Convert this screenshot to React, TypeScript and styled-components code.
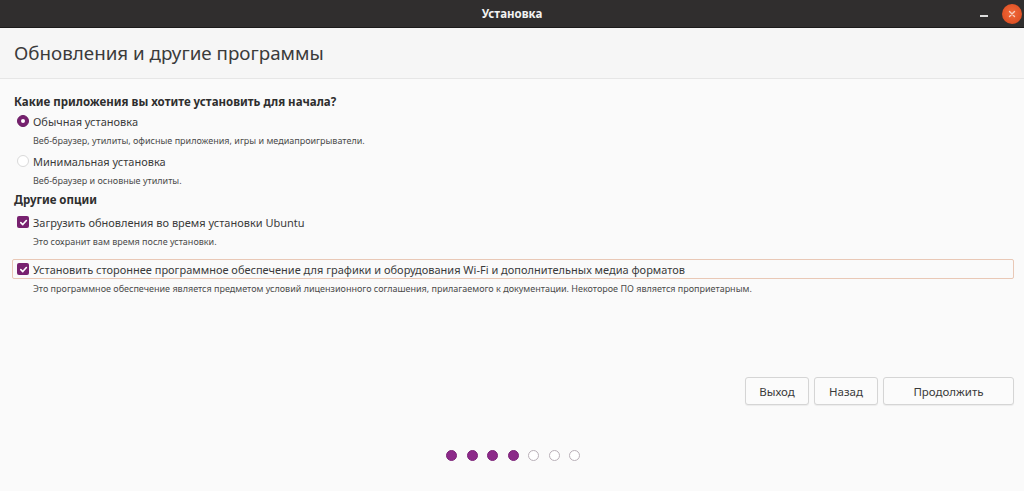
import React from "react";
import styled, { createGlobalStyle } from "styled-components";

const Global = createGlobalStyle`
  html, body { margin: 0; padding: 0; background: #fafafa; }
  body { font-family: "Noto Sans", "Open Sans", sans-serif; color: #3d3d3d; }
  * { box-sizing: border-box; }
`;

const Window = styled.div`
  width: 1024px;
  height: 491px;
  display: flex;
  flex-direction: column;
  background: #fafafa;
  overflow: hidden;
`;

const TitleBar = styled.div`
  height: 28px;
  flex: none;
  background: #302e2e;
  border-bottom: 1px solid #1c1b1b;
  display: grid;
  grid-template-columns: 1fr auto 1fr;
  align-items: center;
  color: #f2f2f2;
  font-size: 11.5px;
  font-weight: 700;
`;

const TitleText = styled.div`
  grid-column: 2;
`;

const TitleControls = styled.div`
  grid-column: 3;
  justify-self: end;
  display: flex;
  align-items: center;
  gap: 14px;
  padding-right: 2px;
`;

const MinButton = styled.div`
  width: 8px;
  height: 2px;
  background: #dcdcdc;
  margin-top: 4px;
`;

const CloseButton = styled.div`
  width: 20px;
  height: 20px;
  border-radius: 50%;
  background: radial-gradient(circle at 50% 45%, #f26a3a, #d7471c);
  display: flex;
  align-items: center;
  justify-content: center;
`;

const Header = styled.div`
  height: 51px;
  flex: none;
  background: #f6f6f6;
  border-bottom: 1px solid #e6e6e6;
  display: flex;
  align-items: center;
  padding-left: 14px;
  font-size: 18.8px;
  color: #3b3b3b;
`;

const Body = styled.div`
  flex: 1;
  display: flex;
  flex-direction: column;
  padding: 14px 10px 0 14px;
`;

const SectionTitle = styled.div`
  font-size: 11.5px;
  font-weight: 700;
  color: #2e2e2e;
  height: 18px;
  line-height: 18px;
`;

const OptionRow = styled.div<{ $focused?: boolean }>`
  display: flex;
  align-items: center;
  gap: 4px;
  height: 20px;
  margin-left: ${(p) => (p.$focused ? "-2px" : "2px")};
  padding-left: ${(p) => (p.$focused ? "4px" : "0")};
  border: 1px solid ${(p) => (p.$focused ? "#e9c8b6" : "transparent")};
  border-radius: 2px;
  font-size: 11px;
  color: #3a3a3a;
`;

const Radio = styled.div<{ $checked?: boolean }>`
  width: 12px;
  height: 12px;
  border-radius: 50%;
  flex: none;
  background: ${(p) => (p.$checked ? "#77216f" : "#ffffff")};
  border: 1px solid ${(p) => (p.$checked ? "#6a1d63" : "#d9d9d9")};
  display: flex;
  align-items: center;
  justify-content: center;
  &::after {
    content: "";
    width: 4px;
    height: 4px;
    border-radius: 50%;
    background: #ffffff;
    display: ${(p) => (p.$checked ? "block" : "none")};
  }
`;

const Check = styled.div`
  width: 12px;
  height: 12px;
  border-radius: 2px;
  flex: none;
  background: #77216f;
  display: flex;
  align-items: center;
  justify-content: center;
`;

const Desc = styled.div`
  font-size: 9px;
  color: #4a4a4a;
  margin-left: 19px;
  height: 20px;
  line-height: 20px;
`;

const Spacer = styled.div<{ $h: number }>`
  height: ${(p) => p.$h}px;
  flex: none;
`;

const Buttons = styled.div`
  display: flex;
  justify-content: flex-end;
  gap: 5px;
  margin-top: 78px;
`;

const Button = styled.button<{ $w: number }>`
  width: ${(p) => p.$w}px;
  height: 28px;
  background: #fbfbfb;
  border: 1px solid #d5d5d5;
  border-radius: 3px;
  font-family: inherit;
  font-size: 11.5px;
  color: #3a3a3a;
  box-shadow: 0 1px 1px rgba(0, 0, 0, 0.06);
`;

const Dots = styled.div`
  display: flex;
  justify-content: center;
  gap: 9.5px;
  margin-top: 45px;
  padding-right: 2px;
`;

const Dot = styled.div<{ $filled?: boolean }>`
  width: 11px;
  height: 11px;
  border-radius: 50%;
  background: ${(p) => (p.$filled ? "#8c2a89" : "#ffffff")};
  border: 1.5px solid ${(p) => (p.$filled ? "#7d2479" : "#b9b0b8")};
`;

const CheckMark = () => (
  <svg width="9" height="9" viewBox="0 0 10 10">
    <path d="M2 5.2 L4.2 7.3 L8.2 2.8" fill="none" stroke="#fff" strokeWidth="1.8" strokeLinecap="round" strokeLinejoin="round" />
  </svg>
);

export default function App() {
  return (
    <Window>
      <Global />
      <TitleBar>
        <TitleText>Установка</TitleText>
        <TitleControls>
          <MinButton />
          <CloseButton>
            <svg width="8" height="8" viewBox="0 0 8 8">
              <path d="M1.5 1.5 L6.5 6.5 M6.5 1.5 L1.5 6.5" stroke="#f6d0c0" strokeWidth="1.4" strokeLinecap="round" />
            </svg>
          </CloseButton>
        </TitleControls>
      </TitleBar>
      <Header>Обновления и другие программы</Header>
      <Body>
        <SectionTitle>Какие приложения вы хотите установить для начала?</SectionTitle>
        <OptionRow>
          <Radio $checked />
          Обычная установка
        </OptionRow>
        <Desc>Веб-браузер, утилиты, офисные приложения, игры и медиапроигрыватели.</Desc>
        <OptionRow>
          <Radio />
          Минимальная установка
        </OptionRow>
        <Desc>Веб-браузер и основные утилиты.</Desc>
        <SectionTitle>Другие опции</SectionTitle>
        <Spacer $h={3} />
        <OptionRow>
          <Check>
            <CheckMark />
          </Check>
          Загрузить обновления во время установки Ubuntu
        </OptionRow>
        <Desc>Это сохранит вам время после установки.</Desc>
        <Spacer $h={7} />
        <OptionRow $focused>
          <Check>
            <CheckMark />
          </Check>
          Установить стороннее программное обеспечение для графики и оборудования Wi-Fi и дополнительных медиа форматов
        </OptionRow>
        <Desc>
          Это программное обеспечение является предметом условий лицензионного соглашения, прилагаемого к документации. Некоторое ПО является проприетарным.
        </Desc>
        <Buttons>
          <Button $w={64}>Выход</Button>
          <Button $w={64}>Назад</Button>
          <Button $w={131}>Продолжить</Button>
        </Buttons>
        <Dots>
          <Dot $filled />
          <Dot $filled />
          <Dot $filled />
          <Dot $filled />
          <Dot />
          <Dot />
          <Dot />
        </Dots>
      </Body>
    </Window>
  );
}
